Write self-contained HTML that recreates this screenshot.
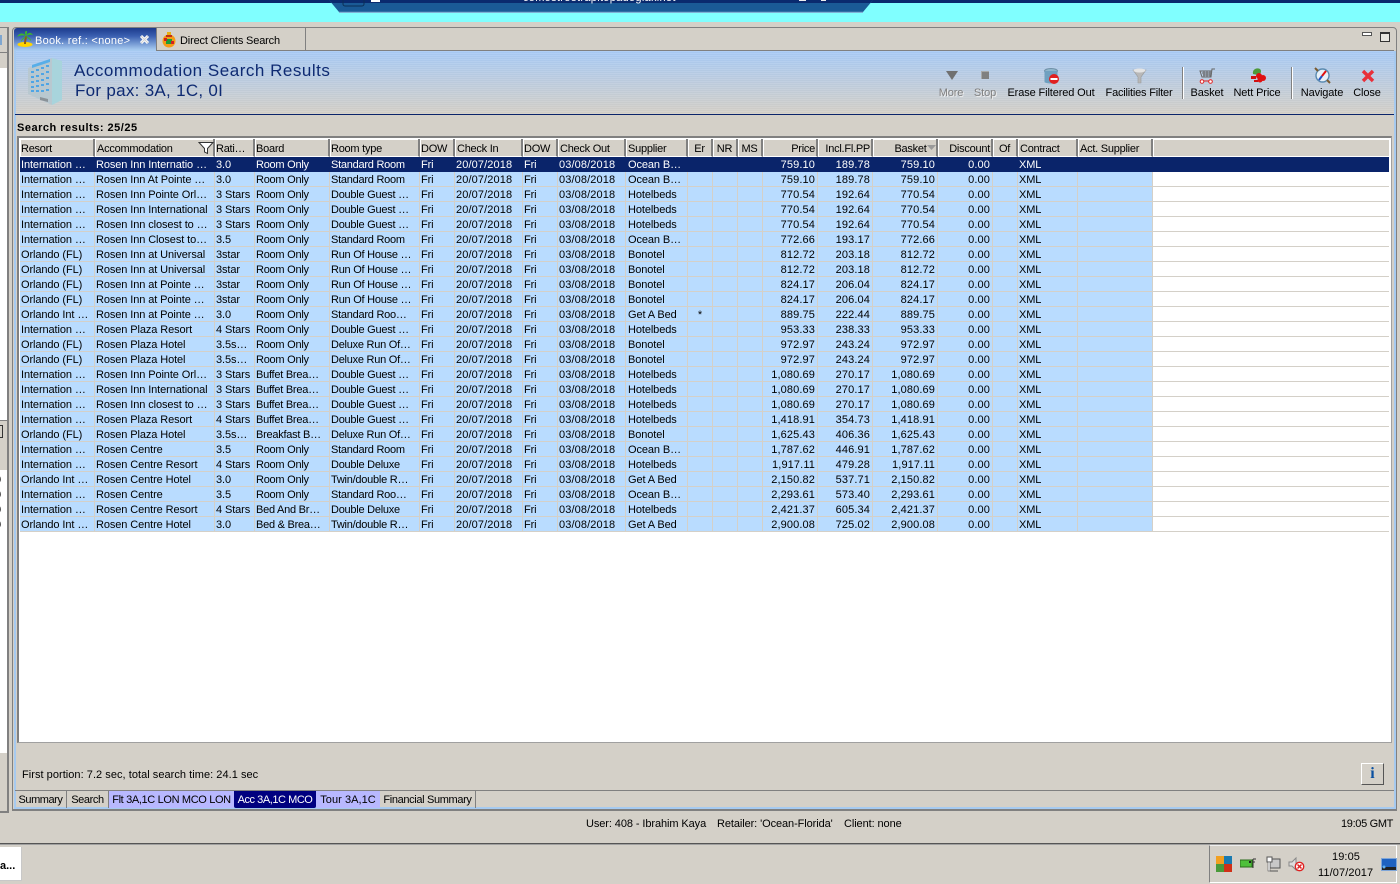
<!DOCTYPE html>
<html><head><meta charset="utf-8"><title>Accommodation Search Results</title>
<style>
html,body{margin:0;padding:0;width:1400px;height:884px;overflow:hidden;background:#d4d0c8}
body{position:relative;font:11px "Liberation Sans",sans-serif;color:#000}
.a{position:absolute}
.t{position:absolute;white-space:nowrap;line-height:14px}
i{font-style:normal;margin-left:3px}
table{position:absolute;left:20px;top:139px;width:1369px;border-collapse:separate;border-spacing:0;table-layout:fixed;font-size:11px}
th,td{overflow:hidden;white-space:nowrap;box-sizing:border-box;font-weight:normal;text-align:left}
th{height:18px;background:#d4d0c8;border-right:2px solid #808080;border-bottom:1px solid #fff;box-shadow:inset 1px 1px 0 #fff;letter-spacing:-.25px;padding:2px 0 0 2px;line-height:14px}
th:nth-child(1),th:nth-child(3),th:nth-child(4),th:nth-child(5),th:nth-child(6),th:nth-child(8){padding-left:1px}
td{height:15px;background:#b9dcff;border-right:1px solid #d4d0c8;border-bottom:1px solid #d4d0c8;line-height:12px;letter-spacing:-.1px;padding:2px 0 0 1px}
td:nth-child(4),td:nth-child(5){letter-spacing:-.25px}
td:nth-child(7),td:nth-child(9),td:nth-child(n+14):nth-child(-n+17){letter-spacing:.12px}
td:nth-child(10){padding-left:2px}
td:nth-child(21){background:#fff;border-right:0}
th:nth-child(21){border-right:0}
td:nth-child(n+14):nth-child(-n+17){text-align:right;padding-right:2px}
th:nth-child(n+14):nth-child(-n+17){text-align:right;padding-right:1px}
th:nth-child(n+11):nth-child(-n+13),th:nth-child(18){text-align:center;padding-left:0}
td:nth-child(11){text-align:center;padding-left:0}
tr.s td{background:#0a246a;color:#fff;border-color:#0a246a}
tr.s td:nth-child(21){background:#0a246a}
.l{position:absolute;top:86px;transform:translateX(-50%);white-space:nowrap;line-height:14px;letter-spacing:-.12px}
.g{color:#808080;text-shadow:1px 1px 0 #eee}
.bt{position:absolute;top:791px;height:17px;line-height:19px;text-align:center;white-space:nowrap;box-sizing:border-box;border-right:1px solid #808080}
</style></head><body>

<!-- top remote desktop strip -->
<div class="a" style="left:0;top:0;width:1400px;height:3px;background:#0a2a6e"></div>
<div class="a" style="left:0;top:3px;width:1400px;height:19px;background:#80ffff"></div>
<svg class="a" style="left:326px;top:0" width="550" height="14"><polygon points="3,0 13,12 537,12 547,0" fill="#1a5a96"/><polygon points="3,0 6,3 544,3 547,0" fill="#0a2a6e"/><path d="M13 12.3H537" stroke="#7fa6cf" stroke-width="1.2"/><rect x="17" y="-6" width="21" height="12" rx="2" fill="none" stroke="#0b2f55"/><rect x="45" y="-2" width="9" height="4" fill="#fff"/><rect x="473" y="-2" width="7" height="3" fill="#eee"/><rect x="495" y="-2" width="5" height="3" fill="#eee"/></svg>
<div class="t" style="left:523px;top:-9px;color:#fff;font-size:11px;letter-spacing:.3px">comostreetrapitopadogiakinet</div>

<!-- left clipped panel -->
<div class="a" style="left:0;top:27px;width:7px;height:783px;background:#d4d0c8;border-right:2px solid #808080;border-top:1px solid #808080;border-bottom:2px solid #808080"></div>
<div class="a" style="left:0;top:68px;width:7px;height:352px;background:#fff"></div>
<div class="a" style="left:0;top:420px;width:7px;height:25px;background:#d4d0c8;border-top:1px solid #808080"></div>
<div class="a" style="left:0;top:470px;width:7px;height:283px;background:#fff"></div>
<div class="a" style="left:0;top:35px;width:2px;height:10px;background:#7fa6cf"></div>
<div class="a" style="left:0;top:52px;width:7px;height:1px;background:#808080"></div>
<div class="a" style="left:0;top:425px;width:2px;height:11px;border:1px solid #333;border-left:0"></div>
<div class="t" style="left:-5px;top:473px;overflow:hidden">0</div>
<div class="t" style="left:-5px;top:488px">0</div>
<div class="t" style="left:-5px;top:503px">0</div>
<div class="t" style="left:-5px;top:518px">0</div>

<!-- main window frame -->
<div class="a" style="left:12px;top:27px;width:1385px;height:784px;box-sizing:border-box;border:1px solid #808080;border-bottom-width:2px;border-radius:4px 4px 0 0;background:#d4d0c8"></div>
<div class="a" style="left:14px;top:51px;width:2px;height:758px;background:#a6caf0"></div>
<div class="a" style="left:1394px;top:51px;width:2px;height:758px;background:#a6caf0"></div>
<div class="a" style="left:14px;top:807px;width:1382px;height:2px;background:#a6caf0"></div>

<!-- tab strip -->
<div class="a" style="left:157px;top:50px;width:1237px;height:1px;background:#808080"></div>
<div class="a" style="left:14px;top:28px;width:142px;height:23px;background:linear-gradient(#1c3a8c 0,#3a5fb0 35%,#a6caf0 95%);border-radius:3px 0 0 0"></div>
<div class="a" style="left:156px;top:28px;width:1px;height:23px;background:#808080"></div>
<div class="a" style="left:305px;top:28px;width:1px;height:22px;background:#808080"></div>
<svg class="a" style="left:16px;top:30px" width="18" height="18"><ellipse cx="9" cy="14.5" rx="7.5" ry="2.5" fill="#ffd400"/><path d="M9 14C9 10 10 8 10 6" stroke="#8a5a18" stroke-width="2" fill="none"/><path d="M10 6C7 2 3 3 1 7C4 5 7 5 10 6ZM10 6C12 2 15 2 17 5C14 4 12 5 10 6ZM10 6C8 7 5 9 5 12C7 9 9 8 10 6ZM10 6C12 7 15 8 15 11C13 9 11 8 10 6ZM10 6C8 2 9 1 11 1C11 3 11 4 10 6Z" fill="#3cb82a"/></svg>
<div class="t" style="left:35px;top:34px;color:#fff;letter-spacing:.27px">Book. ref.: &lt;none&gt;</div>
<svg class="a" style="left:139px;top:34px" width="11" height="11"><path d="M2 2L9 9M9 2L2 9" stroke="#fff" stroke-width="3"/><path d="M2 2L9 9M9 2L2 9" stroke="#d0d0d0" stroke-width="1"/></svg>
<svg class="a" style="left:161px;top:31px" width="16" height="17"><circle cx="8" cy="10" r="6.5" fill="#f59a14"/><rect x="6" y="1" width="4" height="3" fill="#e8b010"/><rect x="5" y="4" width="6" height="2" fill="#c03018"/><rect x="5" y="8" width="6" height="5" fill="#1e9a3a"/><rect x="3" y="7" width="3" height="3" fill="#d02020"/><rect x="10" y="10" width="3" height="3" fill="#d02020"/></svg>
<div class="t" style="left:180px;top:34px;letter-spacing:-.16px">Direct Clients Search</div>
<div class="a" style="left:1362px;top:32px;width:8px;height:2px;border:1px solid #555;background:#fff"></div>
<div class="a" style="left:1380px;top:32px;width:8px;height:7px;border:1px solid #333;border-top-width:2px;background:#e8e6e0"></div>

<!-- banner -->
<div class="a" style="left:16px;top:51px;width:1378px;height:63px;background:repeating-linear-gradient(rgba(255,255,255,.07) 0,rgba(255,255,255,.07) 1px,rgba(0,0,0,.015) 1px,rgba(0,0,0,.015) 2px),linear-gradient(#a9cbf6,#d4d0c8)"></div>
<div class="a" style="left:15px;top:114px;width:1379px;height:1px;background:#0a246a"></div>
<svg class="a" style="left:26px;top:57px" width="38" height="49"><polygon points="2,11 26,1 26,48 2,37" fill="#b8c8d0"/><polygon points="26,1 36,4 36,43 26,48" fill="#a8d4dc"/><polygon points="6,8 24,2 24,5 6,11" fill="#58aee8"/><g fill="#4ea5e6"><rect x="5" y="14" width="3" height="2"/><rect x="10" y="12" width="3" height="2"/><rect x="15" y="10" width="3" height="2"/><rect x="20" y="8" width="3" height="2"/><rect x="5" y="19" width="3" height="2"/><rect x="10" y="18" width="3" height="2"/><rect x="15" y="16" width="3" height="2"/><rect x="20" y="14" width="3" height="2"/><rect x="5" y="24" width="3" height="2"/><rect x="10" y="23" width="3" height="2"/><rect x="15" y="22" width="3" height="2"/><rect x="20" y="20" width="3" height="2"/><rect x="5" y="29" width="3" height="2"/><rect x="10" y="28" width="3" height="2"/><rect x="15" y="27" width="3" height="2"/><rect x="20" y="26" width="3" height="2"/><rect x="5" y="33" width="3" height="2"/><rect x="10" y="33" width="3" height="2"/><rect x="15" y="33" width="3" height="2"/><rect x="20" y="32" width="3" height="2"/></g><polygon points="14,40 22,42 22,45 14,43" fill="#8a9298"/></svg>
<div class="t" style="left:74px;top:61px;font-size:17px;line-height:20px;color:#0e2a72;letter-spacing:.52px">Accommodation Search Results</div>
<div class="t" style="left:75px;top:81px;font-size:17px;line-height:20px;color:#0e2a72;letter-spacing:.29px">For pax: 3A, 1C, 0I</div>

<!-- toolbar -->
<svg class="a" style="left:945px;top:69px" width="14" height="13"><polygon points="1,2 13,2 7,11" fill="#707070"/></svg>
<div class="a" style="left:981px;top:71px;width:8px;height:8px;background:#808080;box-shadow:inset 1px 1px 0 #a8a8a8"></div>
<svg class="a" style="left:1043px;top:68px" width="18" height="17"><ellipse cx="8" cy="3" rx="6.5" ry="2.5" fill="#8fb6cc" stroke="#6f8fa6"/><path d="M1.5 3V14C3 16 13 16 14.5 14V3" fill="#6fa0c0"/><circle cx="11" cy="11" r="5" fill="#e02020"/><rect x="7.5" y="10" width="7" height="2" fill="#fff"/></svg>
<svg class="a" style="left:1132px;top:68px" width="15" height="17"><polygon points="1,2 14,2 9,9 9,15 6,15 6,9" fill="#b8b8b8" stroke="#999" stroke-width=".6"/><ellipse cx="7.5" cy="2.5" rx="6" ry="2" fill="#e4e4e4"/></svg>
<div class="a" style="left:1182px;top:67px;width:2px;height:32px;background:linear-gradient(90deg,#808080 50%,#fff 50%)"></div>
<div class="a" style="left:1291px;top:67px;width:2px;height:32px;background:linear-gradient(90deg,#808080 50%,#fff 50%)"></div>
<svg class="a" style="left:1199px;top:68px" width="17" height="16"><path d="M16 1H13L12 9H3L1 3H13M3 5H12M4 7H12M5 3V9M8 3V9M11 3V9" stroke="#666" stroke-width="1" fill="none"/><path d="M4 13H11" stroke="#e02020"/><circle cx="3" cy="13.5" r="1.8" fill="#fff" stroke="#e02020"/><circle cx="11.5" cy="13.5" r="1.8" fill="#fff" stroke="#e02020"/></svg>
<svg class="a" style="left:1250px;top:67px" width="17" height="17"><path d="M3 7C2 3 6 0 10 2C12 4 11 7 8 8Z" fill="#4e9a3a"/><circle cx="9" cy="9" r="3" fill="#e01010"/><circle cx="13" cy="11" r="3" fill="#e01010"/><circle cx="10" cy="13" r="2.5" fill="#e01010"/><rect x="1" y="9" width="5" height="3" fill="#d01010"/><rect x="4" y="13" width="4" height="2" fill="#d01010"/></svg>
<svg class="a" style="left:1314px;top:67px" width="17" height="17"><circle cx="8.5" cy="8.5" r="6.5" fill="#e8f0f8" stroke="#5a8ab0" stroke-width="1.4"/><path d="M12 4L8 9" stroke="#e01010" stroke-width="2"/><path d="M8 9L5 13" stroke="#2050c0" stroke-width="2"/><path d="M1 1L4 4M13 13L16 16" stroke="#7a5a30" stroke-width="2"/></svg>
<svg class="a" style="left:1361px;top:69px" width="14" height="14"><path d="M2 2L12 12M12 2L2 12" stroke="#e8303a" stroke-width="3.4"/></svg>
<div class="l g" style="left:951px">More</div>
<div class="l g" style="left:985px">Stop</div>
<div class="l" style="left:1051px">Erase Filtered Out</div>
<div class="l" style="left:1139px;letter-spacing:-.2px">Facilities Filter</div>
<div class="l" style="left:1207px">Basket</div>
<div class="l" style="left:1257px">Nett Price</div>
<div class="l" style="left:1322px">Navigate</div>
<div class="l" style="left:1367px">Close</div>

<div class="t" style="left:17px;top:121px;font-weight:bold;letter-spacing:.5px">Search results: 25/25</div>

<!-- grid frame -->
<div class="a" style="left:17px;top:136px;width:1375px;height:607px;box-sizing:border-box;border:2px solid #808080;border-right:1px solid #a0a0a0;border-bottom:1px solid #a0a0a0;background:#fff"></div>

<table>
<colgroup><col style="width:75px"><col style="width:120px"><col style="width:40px"><col style="width:75px"><col style="width:90px"><col style="width:35px"><col style="width:68px"><col style="width:35px"><col style="width:68px"><col style="width:62px"><col style="width:25px"><col style="width:25px"><col style="width:25px"><col style="width:55px"><col style="width:55px"><col style="width:65px"><col style="width:55px"><col style="width:25px"><col style="width:60px"><col style="width:75px"><col></colgroup>
<tr><th>Resort</th><th>Accommodation</th><th>Rati…</th><th>Board</th><th>Room type</th><th>DOW</th><th>Check In</th><th>DOW</th><th>Check Out</th><th>Supplier</th><th>Er</th><th>NR</th><th>MS</th><th>Price</th><th>Incl.Fl.PP</th><th>Basket&nbsp;&nbsp;&nbsp;</th><th>Discount</th><th>Of</th><th>Contract</th><th>Act. Supplier</th><th></th></tr>
<tr class="s"><td>Internation<i>…</i></td><td>Rosen Inn Internatio<i>…</i></td><td>3.0</td><td>Room Only</td><td>Standard Room</td><td>Fri</td><td>20/07/2018</td><td>Fri</td><td>03/08/2018</td><td>Ocean B…</td><td></td><td></td><td></td><td>759.10</td><td>189.78</td><td>759.10</td><td>0.00</td><td></td><td>XML</td><td></td><td></td></tr>
<tr><td>Internation<i>…</i></td><td>Rosen Inn At Pointe …</td><td>3.0</td><td>Room Only</td><td>Standard Room</td><td>Fri</td><td>20/07/2018</td><td>Fri</td><td>03/08/2018</td><td>Ocean B…</td><td></td><td></td><td></td><td>759.10</td><td>189.78</td><td>759.10</td><td>0.00</td><td></td><td>XML</td><td></td><td></td></tr>
<tr><td>Internation<i>…</i></td><td>Rosen Inn Pointe Orl…</td><td>3 Stars</td><td>Room Only</td><td>Double Guest …</td><td>Fri</td><td>20/07/2018</td><td>Fri</td><td>03/08/2018</td><td>Hotelbeds</td><td></td><td></td><td></td><td>770.54</td><td>192.64</td><td>770.54</td><td>0.00</td><td></td><td>XML</td><td></td><td></td></tr>
<tr><td>Internation<i>…</i></td><td>Rosen Inn International</td><td>3 Stars</td><td>Room Only</td><td>Double Guest …</td><td>Fri</td><td>20/07/2018</td><td>Fri</td><td>03/08/2018</td><td>Hotelbeds</td><td></td><td></td><td></td><td>770.54</td><td>192.64</td><td>770.54</td><td>0.00</td><td></td><td>XML</td><td></td><td></td></tr>
<tr><td>Internation<i>…</i></td><td>Rosen Inn closest to …</td><td>3 Stars</td><td>Room Only</td><td>Double Guest …</td><td>Fri</td><td>20/07/2018</td><td>Fri</td><td>03/08/2018</td><td>Hotelbeds</td><td></td><td></td><td></td><td>770.54</td><td>192.64</td><td>770.54</td><td>0.00</td><td></td><td>XML</td><td></td><td></td></tr>
<tr><td>Internation<i>…</i></td><td>Rosen Inn Closest to…</td><td>3.5</td><td>Room Only</td><td>Standard Room</td><td>Fri</td><td>20/07/2018</td><td>Fri</td><td>03/08/2018</td><td>Ocean B…</td><td></td><td></td><td></td><td>772.66</td><td>193.17</td><td>772.66</td><td>0.00</td><td></td><td>XML</td><td></td><td></td></tr>
<tr><td>Orlando (FL)</td><td>Rosen Inn at Universal</td><td>3star</td><td>Room Only</td><td>Run Of House …</td><td>Fri</td><td>20/07/2018</td><td>Fri</td><td>03/08/2018</td><td>Bonotel</td><td></td><td></td><td></td><td>812.72</td><td>203.18</td><td>812.72</td><td>0.00</td><td></td><td>XML</td><td></td><td></td></tr>
<tr><td>Orlando (FL)</td><td>Rosen Inn at Universal</td><td>3star</td><td>Room Only</td><td>Run Of House …</td><td>Fri</td><td>20/07/2018</td><td>Fri</td><td>03/08/2018</td><td>Bonotel</td><td></td><td></td><td></td><td>812.72</td><td>203.18</td><td>812.72</td><td>0.00</td><td></td><td>XML</td><td></td><td></td></tr>
<tr><td>Orlando (FL)</td><td>Rosen Inn at Pointe …</td><td>3star</td><td>Room Only</td><td>Run Of House …</td><td>Fri</td><td>20/07/2018</td><td>Fri</td><td>03/08/2018</td><td>Bonotel</td><td></td><td></td><td></td><td>824.17</td><td>206.04</td><td>824.17</td><td>0.00</td><td></td><td>XML</td><td></td><td></td></tr>
<tr><td>Orlando (FL)</td><td>Rosen Inn at Pointe …</td><td>3star</td><td>Room Only</td><td>Run Of House …</td><td>Fri</td><td>20/07/2018</td><td>Fri</td><td>03/08/2018</td><td>Bonotel</td><td></td><td></td><td></td><td>824.17</td><td>206.04</td><td>824.17</td><td>0.00</td><td></td><td>XML</td><td></td><td></td></tr>
<tr><td>Orlando Int<i>…</i></td><td>Rosen Inn at Pointe …</td><td>3.0</td><td>Room Only</td><td>Standard Roo…</td><td>Fri</td><td>20/07/2018</td><td>Fri</td><td>03/08/2018</td><td>Get A Bed</td><td>*</td><td></td><td></td><td>889.75</td><td>222.44</td><td>889.75</td><td>0.00</td><td></td><td>XML</td><td></td><td></td></tr>
<tr><td>Internation<i>…</i></td><td>Rosen Plaza Resort</td><td>4 Stars</td><td>Room Only</td><td>Double Guest …</td><td>Fri</td><td>20/07/2018</td><td>Fri</td><td>03/08/2018</td><td>Hotelbeds</td><td></td><td></td><td></td><td>953.33</td><td>238.33</td><td>953.33</td><td>0.00</td><td></td><td>XML</td><td></td><td></td></tr>
<tr><td>Orlando (FL)</td><td>Rosen Plaza Hotel</td><td>3.5s…</td><td>Room Only</td><td>Deluxe Run Of…</td><td>Fri</td><td>20/07/2018</td><td>Fri</td><td>03/08/2018</td><td>Bonotel</td><td></td><td></td><td></td><td>972.97</td><td>243.24</td><td>972.97</td><td>0.00</td><td></td><td>XML</td><td></td><td></td></tr>
<tr><td>Orlando (FL)</td><td>Rosen Plaza Hotel</td><td>3.5s…</td><td>Room Only</td><td>Deluxe Run Of…</td><td>Fri</td><td>20/07/2018</td><td>Fri</td><td>03/08/2018</td><td>Bonotel</td><td></td><td></td><td></td><td>972.97</td><td>243.24</td><td>972.97</td><td>0.00</td><td></td><td>XML</td><td></td><td></td></tr>
<tr><td>Internation<i>…</i></td><td>Rosen Inn Pointe Orl…</td><td>3 Stars</td><td>Buffet Brea…</td><td>Double Guest …</td><td>Fri</td><td>20/07/2018</td><td>Fri</td><td>03/08/2018</td><td>Hotelbeds</td><td></td><td></td><td></td><td>1,080.69</td><td>270.17</td><td>1,080.69</td><td>0.00</td><td></td><td>XML</td><td></td><td></td></tr>
<tr><td>Internation<i>…</i></td><td>Rosen Inn International</td><td>3 Stars</td><td>Buffet Brea…</td><td>Double Guest …</td><td>Fri</td><td>20/07/2018</td><td>Fri</td><td>03/08/2018</td><td>Hotelbeds</td><td></td><td></td><td></td><td>1,080.69</td><td>270.17</td><td>1,080.69</td><td>0.00</td><td></td><td>XML</td><td></td><td></td></tr>
<tr><td>Internation<i>…</i></td><td>Rosen Inn closest to …</td><td>3 Stars</td><td>Buffet Brea…</td><td>Double Guest …</td><td>Fri</td><td>20/07/2018</td><td>Fri</td><td>03/08/2018</td><td>Hotelbeds</td><td></td><td></td><td></td><td>1,080.69</td><td>270.17</td><td>1,080.69</td><td>0.00</td><td></td><td>XML</td><td></td><td></td></tr>
<tr><td>Internation<i>…</i></td><td>Rosen Plaza Resort</td><td>4 Stars</td><td>Buffet Brea…</td><td>Double Guest …</td><td>Fri</td><td>20/07/2018</td><td>Fri</td><td>03/08/2018</td><td>Hotelbeds</td><td></td><td></td><td></td><td>1,418.91</td><td>354.73</td><td>1,418.91</td><td>0.00</td><td></td><td>XML</td><td></td><td></td></tr>
<tr><td>Orlando (FL)</td><td>Rosen Plaza Hotel</td><td>3.5s…</td><td>Breakfast B…</td><td>Deluxe Run Of…</td><td>Fri</td><td>20/07/2018</td><td>Fri</td><td>03/08/2018</td><td>Bonotel</td><td></td><td></td><td></td><td>1,625.43</td><td>406.36</td><td>1,625.43</td><td>0.00</td><td></td><td>XML</td><td></td><td></td></tr>
<tr><td>Internation<i>…</i></td><td>Rosen Centre</td><td>3.5</td><td>Room Only</td><td>Standard Room</td><td>Fri</td><td>20/07/2018</td><td>Fri</td><td>03/08/2018</td><td>Ocean B…</td><td></td><td></td><td></td><td>1,787.62</td><td>446.91</td><td>1,787.62</td><td>0.00</td><td></td><td>XML</td><td></td><td></td></tr>
<tr><td>Internation<i>…</i></td><td>Rosen Centre Resort</td><td>4 Stars</td><td>Room Only</td><td>Double Deluxe</td><td>Fri</td><td>20/07/2018</td><td>Fri</td><td>03/08/2018</td><td>Hotelbeds</td><td></td><td></td><td></td><td>1,917.11</td><td>479.28</td><td>1,917.11</td><td>0.00</td><td></td><td>XML</td><td></td><td></td></tr>
<tr><td>Orlando Int<i>…</i></td><td>Rosen Centre Hotel</td><td>3.0</td><td>Room Only</td><td>Twin/double R…</td><td>Fri</td><td>20/07/2018</td><td>Fri</td><td>03/08/2018</td><td>Get A Bed</td><td></td><td></td><td></td><td>2,150.82</td><td>537.71</td><td>2,150.82</td><td>0.00</td><td></td><td>XML</td><td></td><td></td></tr>
<tr><td>Internation<i>…</i></td><td>Rosen Centre</td><td>3.5</td><td>Room Only</td><td>Standard Roo…</td><td>Fri</td><td>20/07/2018</td><td>Fri</td><td>03/08/2018</td><td>Ocean B…</td><td></td><td></td><td></td><td>2,293.61</td><td>573.40</td><td>2,293.61</td><td>0.00</td><td></td><td>XML</td><td></td><td></td></tr>
<tr><td>Internation<i>…</i></td><td>Rosen Centre Resort</td><td>4 Stars</td><td>Bed And Br…</td><td>Double Deluxe</td><td>Fri</td><td>20/07/2018</td><td>Fri</td><td>03/08/2018</td><td>Hotelbeds</td><td></td><td></td><td></td><td>2,421.37</td><td>605.34</td><td>2,421.37</td><td>0.00</td><td></td><td>XML</td><td></td><td></td></tr>
<tr><td>Orlando Int<i>…</i></td><td>Rosen Centre Hotel</td><td>3.0</td><td>Bed &amp; Brea…</td><td>Twin/double R…</td><td>Fri</td><td>20/07/2018</td><td>Fri</td><td>03/08/2018</td><td>Get A Bed</td><td></td><td></td><td></td><td>2,900.08</td><td>725.02</td><td>2,900.08</td><td>0.00</td><td></td><td>XML</td><td></td><td></td></tr>
</table>
<svg class="a" style="left:198px;top:141px" width="16" height="14"><path d="M1 1.5H15L9.5 7.5V12.5L6.5 11V7.5Z" fill="#fff" stroke="#333"/></svg>
<svg class="a" style="left:927px;top:145px" width="10" height="6"><polygon points="0,0 9,0 4.5,5" fill="#9a9a9a"/></svg>

<!-- bottom area -->
<div class="t" style="left:22px;top:768px;letter-spacing:.04px">First portion: 7.2 sec, total search time: 24.1 sec</div>
<div class="a" style="left:1361px;top:763px;width:23px;height:22px;box-sizing:border-box;border:1px solid;border-color:#fff #555 #555 #fff;background:#d4d0c8;color:#0a50a0;font:bold 16px/20px 'Liberation Serif',serif;text-align:center">i</div>
<div class="a" style="left:15px;top:790px;width:1379px;height:1px;background:#808080"></div>
<div class="bt" style="left:15px;width:52px;letter-spacing:-.45px">Summary</div>
<div class="bt" style="left:67px;width:42px;letter-spacing:-.38px">Search</div>
<div class="bt" style="left:109px;width:125px;background:#b8b8ff;border:0;letter-spacing:-.35px">Flt 3A,1C LON MCO LON</div>
<div class="bt" style="left:234px;width:82px;background:#000080;color:#fff;border:0;border-radius:0 0 2px 2px;letter-spacing:-.45px">Acc 3A,1C MCO</div>
<div class="bt" style="left:316px;width:64px;background:#b8b8ff;border:0;letter-spacing:.05px">Tour 3A,1C</div>
<div class="bt" style="left:380px;width:96px;letter-spacing:-.35px">Financial Summary</div>

<!-- status -->
<div class="t" style="left:586px;top:817px;letter-spacing:-.09px">User: 408 - Ibrahim Kaya</div>
<div class="t" style="left:717px;top:817px;letter-spacing:-.09px">Retailer: 'Ocean-Florida'</div>
<div class="t" style="left:844px;top:817px;letter-spacing:-.09px">Client: none</div>
<div class="t" style="left:1341px;top:817px;letter-spacing:-.33px">19:05 GMT</div>

<!-- taskbar -->
<div class="a" style="left:0;top:843px;width:1400px;height:1px;background:#555"></div>
<div class="a" style="left:0;top:844px;width:1400px;height:1px;background:#a0a0a0"></div>
<div class="a" style="left:-2px;top:846px;width:25px;height:36px;box-sizing:border-box;background:#fff;border:1px solid #d4d0c8;box-shadow:inset -1px -1px 0 #c8c8c8"></div>
<div class="t" style="left:0;top:859px;font-weight:bold;font-size:11px">a...</div>
<div class="a" style="left:1209px;top:845px;width:188px;height:38px;box-sizing:border-box;border:1px solid;border-color:#fff #fff #fff #808080;border-top:1px solid #eee"></div>
<svg class="a" style="left:1216px;top:856px" width="16" height="16"><rect width="8" height="8" fill="#f2a020"/><rect x="8" width="8" height="8" fill="#1a7ab0"/><rect y="8" width="8" height="8" fill="#4a9a3a"/><rect x="8" y="8" width="8" height="8" fill="#d03018"/></svg>
<svg class="a" style="left:1240px;top:858px" width="16" height="12"><rect y="2" width="12" height="7" fill="#4ec03a" stroke="#2a6a1a"/><rect x="9" y="3" width="2" height="2" fill="#222"/><path d="M13 1V10M13 1H16M13 4H15" stroke="#333" fill="none"/></svg>
<svg class="a" style="left:1263px;top:856px" width="18" height="16"><rect x="7" y="3" width="10" height="9" fill="#c8c8c8" stroke="#555"/><rect x="4" y="1" width="5" height="5" fill="#fff" stroke="#555"/><rect x="5" y="6" width="2" height="9" fill="#fff" stroke="#555" stroke-width=".6"/><path d="M7 15H15" stroke="#555"/></svg>
<svg class="a" style="left:1288px;top:856px" width="17" height="16"><polygon points="1,6 4,6 8,2 8,14 4,10 1,10" fill="#ddd" stroke="#888"/><circle cx="11.5" cy="10.5" r="4.2" fill="#fff" stroke="#e02020" stroke-width="1.4"/><path d="M9.5 8.5L13.5 12.5M13.5 8.5L9.5 12.5" stroke="#e02020" stroke-width="1.5"/></svg>
<div class="t" style="left:1332px;top:850px;letter-spacing:.1px">19:05</div>
<div class="t" style="left:1318px;top:866px;letter-spacing:.1px">11/07/2017</div>
<svg class="a" style="left:1381px;top:858px" width="16" height="13"><rect width="16" height="13" fill="#7fa6d8"/><rect x="1" y="1" width="14" height="8" fill="#1f62c0"/><rect x="1" y="9" width="14" height="3" fill="#222"/><circle cx="3" cy="9" r="1.5" fill="#60b0f0"/></svg>
</body></html>
